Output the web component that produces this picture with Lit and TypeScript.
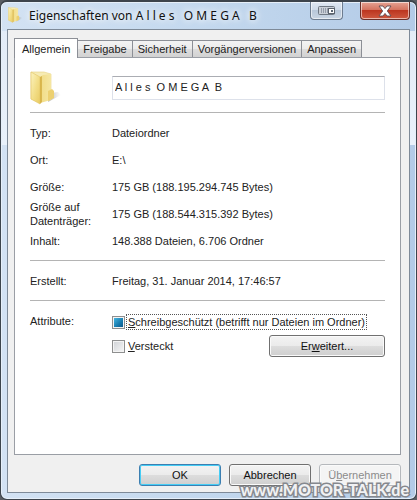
import { LitElement, html, css, svg } from "lit";
import { customElement, state } from "lit/decorators.js";

const folder = (cls: string) => html`
  <svg class=${cls} viewBox="0 0 32 34" aria-hidden="true">
    ${svg`
    <defs>
      <linearGradient id="front" x1="0" x2="1" y1="0" y2="1">
        <stop offset="0" stop-color="#fbf3c0" /><stop offset="0.5" stop-color="#f3df8a" /><stop offset="1" stop-color="#e9cb62" />
      </linearGradient>
      <linearGradient id="back" x1="0" x2="1" y1="0" y2="0">
        <stop offset="0" stop-color="#f1dc86" /><stop offset="1" stop-color="#f5e6a2" />
      </linearGradient>
      <linearGradient id="shade" x1="0" x2="1" y1="0" y2="0">
        <stop offset="0" stop-color="#8c8c8c" stop-opacity="0.7" /><stop offset="1" stop-color="#b0b0b0" stop-opacity="0" />
      </linearGradient>
    </defs>
    <path d="M18 31 L31 24 L28 21 L21 22 Z" fill="url(#shade)" />
    <path d="M1 1 L14 1 L21 3 L21 27 L9 31 L1 28 Z" fill="#f6ebb4" stroke="#e8d282" stroke-width="0.6" />
    <path d="M10 6 L13 4 L21 3 L21 29 L10 32 Z" fill="url(#back)" />
    <path d="M1 1 L10 6 L10 33 L1 28 Z" fill="url(#front)" stroke="#e2c566" stroke-width="0.6" />
    <path d="M10 6 L12 5 L12 31 L10 33 Z" fill="#d2ab3c" opacity="0.75" />
    <path d="M18 20 L22 18 L24 20 L24 27 L18 30 Z" fill="#ecd071" />
    `}
  </svg>
`;

@customElement("app-root")
export class AppRoot extends LitElement {
  static styles = css`
    * {
      box-sizing: border-box;
    }
    :host {
      display: block;
      background: #5a5e64;
      font: 11px/14px "Liberation Sans", Arial, sans-serif;
      color: #222;
    }
    .window {
      position: relative;
      display: flex;
      flex-direction: column;
      min-height: 100vh;
      padding: 0 6px 6px;
      border: 1px solid #3d444c;
      border-top-width: 2px;
      border-radius: 7px;
      background:
        linear-gradient(#fff0 0 29px, #e3ecf7 29px, #e9f1fa 143px, #fff0 143px),
        linear-gradient(90deg, #d3e2f3, #c3d8ee 50%, #b3cbe7);
      box-shadow: inset 0 0 0 1px #e6eff9;
    }
    .title {
      display: flex;
      align-items: flex-start;
      height: 27px;
      flex: none;
    }
    .icon-small {
      width: 15px;
      height: 16px;
      margin: 5px 6px 0 1px;
    }
    h1 {
      flex: 1;
      margin: 0;
      padding-top: 5px;
      font: 12px/17px "Noto Sans", "Open Sans", sans-serif;
      color: #111;
      white-space: pre;
      text-shadow: 0 0 6px #fff, 0 0 8px #fff;
    }
    .cap {
      display: flex;
      align-items: center;
      justify-content: center;
      padding: 0;
      height: 18px;
      border: 1px solid #6d7c8f;
      border-top: 0;
      border-radius: 0 0 4px 4px;
      box-shadow: inset 0 0 0 1px #ffffff90;
    }
    .dock {
      width: 33px;
      margin-right: 17px;
      background: linear-gradient(#dfe8f3, #cdd9e7 50%, #b9c8da 50%, #c9d5e3);
    }
    .close {
      width: 50px;
      border-color: #6b302a;
      background: linear-gradient(#e6a394, #d4705c 48%, #bc3620 50%, #cf5940);
    }
    .client {
      flex: 1;
      display: flex;
      flex-direction: column;
      padding: 8px 8px 6px 6px;
      border: 1px solid #7e8a98;
      background: #f0f0f0;
    }
    .tabs {
      display: flex;
      align-items: flex-end;
      height: 19px;
      z-index: 1;
    }
    .tab {
      height: 17px;
      padding: 0 5px;
      border: 1px solid #8c8f96;
      border-bottom: 0;
      border-left: 0;
      background: linear-gradient(#f3f3f3, #ebebeb 50%, #dddddd 50%, #d2d2d2);
      font: 11px/16px "Liberation Sans", Arial, sans-serif;
      color: #222;
      white-space: nowrap;
    }
    .tab.active {
      height: 20px;
      margin-bottom: -1px;
      padding: 0 7px;
      border-left: 1px solid #8c8f96;
      background: #fff;
    }
    .panel {
      flex: 1;
      padding: 12px 15px;
      border: 1px solid #9a9ea5;
      background: #fff;
    }
    .head {
      display: flex;
      align-items: center;
      height: 36px;
    }
    .icon-large {
      width: 32px;
      height: 34px;
      margin-right: 50px;
    }
    .name {
      flex: 1;
      min-width: 0;
      height: 24px;
      padding: 0 2px 3px;
      border: 1px solid #dde1ea;
      border-top-color: #abadb3;
      font: 11px/14px "Liberation Sans", Arial, sans-serif;
      color: #222;
    }
    hr {
      margin: 6px 0;
      border: 0;
      border-top: 1px solid #b4b4b4;
    }
    dl {
      margin: 0;
    }
    .row {
      display: flex;
      align-items: center;
      height: 27px;
    }
    dt,
    .legend {
      width: 82px;
      flex: none;
    }
    dd {
      margin: 0;
    }
    .attrs {
      display: flex;
      padding-top: 7px;
    }
    .options {
      flex: 1;
    }
    .option-row {
      display: flex;
      align-items: center;
      height: 24px;
    }
    .option-row:first-child {
      height: 16px;
      margin-bottom: 4px;
    }
    label {
      display: flex;
      align-items: center;
      gap: 2px;
      white-space: nowrap;
    }
    .caption {
      padding: 0 1px;
    }
    .focused {
      outline: 1px dotted #555;
    }
    .box {
      appearance: none;
      flex: none;
      width: 13px;
      height: 13px;
      margin: 0;
      border: 1px solid #8e8f8f;
      background: linear-gradient(135deg, #cfd2d6, #f6f6f6);
      box-shadow: inset 0 0 0 1px #f4f4f4;
    }
    .box:indeterminate {
      background: linear-gradient(135deg, #4dc0ea, #1679ac 60%, #0e4f80);
    }
    .btn {
      height: 22px;
      padding: 0;
      border: 1px solid #707070;
      border-radius: 3px;
      background: linear-gradient(#f3f3f3, #ebebeb 50%, #dddddd 50%, #cfcfcf);
      box-shadow: inset 0 0 0 1px #fafafa;
      font: 11px/16px "Liberation Sans", Arial, sans-serif;
      color: #111;
    }
    .advanced {
      width: 116px;
      margin-left: auto;
    }
    .footer {
      display: flex;
      justify-content: flex-end;
      gap: 8px;
      padding-top: 9px;
    }
    .footer .btn {
      width: 82px;
    }
    .footer .default {
      border-color: #3c7fb1;
      box-shadow: inset 0 0 0 1px #46cdf5;
    }
    .btn:disabled {
      border-color: #b5b8bc;
      background: #f4f4f4;
      color: #8b8b8b;
    }
    .mark {
      position: absolute;
      right: 7px;
      bottom: -1px;
      font: 900 16px/20px Lato, sans-serif;
      color: #f0f1f3;
      -webkit-text-stroke: 3px #85888e;
      paint-order: stroke fill;
      pointer-events: none;
    }
  `;

  @state() private tab = "Allgemein";

  private tabs = ["Allgemein", "Freigabe", "Sicherheit", "Vorgängerversionen", "Anpassen"];

  private facts = [
    ["Typ:", "Dateiordner"],
    ["Ort:", "E:\\"],
    ["Größe:", "175 GB (188.195.294.745 Bytes)"],
    ["Größe auf Datenträger:", "175 GB (188.544.315.392 Bytes)"],
    ["Inhalt:", "148.388 Dateien, 6.706 Ordner"],
  ];

  private row([label, value]: string[]) {
    return html`<div class="row"><dt>${label}</dt><dd>${value}</dd></div>`;
  }

  render() {
    return html`
      <main class="window">
        <header class="title">
          ${folder("icon-small")}
          <h1>Eigenschaften von A l l e s   O M E G A   B</h1>
          <button class="cap dock" aria-label="Andocken">
            <svg width="18" height="10" viewBox="0 0 18 10">
              <rect x="0.5" y="0.5" width="16" height="8" rx="1" fill="#c9cfd7" stroke="#6f7883" />
              <path d="M3.500 2v5M5.500 2v5M7.500 2v5M9.500 2v5" stroke="#959daa" />
              <rect x="10.500" y="2.500" width="6" height="5" fill="#fff" stroke="#5a626d" />
              <path d="M13 4h2v2h-2z" fill="#5c6673" />
            </svg>
          </button>
          <button class="cap close" aria-label="Schließen">
            <svg width="14" height="12" viewBox="0 0 14 12">
              <path d="M1 1h4l2 2.600 2-2.600h4L9.300 6 13 11H9L7 8.400 5 11H1l3.700-5z" fill="#fff" stroke="#5f4a50" stroke-width="0.9" />
            </svg>
          </button>
        </header>
        <section class="client">
          <nav class="tabs" role="tablist">
            ${this.tabs.map(
              (t) => html`<button
                role="tab"
                class="tab ${t === this.tab ? "active" : ""}"
                aria-selected=${t === this.tab}
                @click=${() => (this.tab = t)}
              >${t}</button>`
            )}
          </nav>
          <div class="panel" role="tabpanel">
            <div class="head">
              ${folder("icon-large")}
              <input class="name" aria-label="Name" value="A l l e s  O M E G A  B" />
            </div>
            <hr />
            <dl>${this.facts.map((f) => this.row(f))}</dl>
            <hr />
            <dl>${this.row(["Erstellt:", "Freitag, 31. Januar 2014, 17:46:57"])}</dl>
            <hr />
            <div class="attrs" role="group" aria-labelledby="attr">
              <div class="legend" id="attr">Attribute:</div>
              <div class="options">
                <div class="option-row">
                  <label>
                    <input class="box" type="checkbox" .indeterminate=${true} />
                    <span class="caption focused"><u>S</u>chreibgeschützt (betrifft nur Dateien im Ordner)</span>
                  </label>
                </div>
                <div class="option-row">
                  <label>
                    <input class="box" type="checkbox" />
                    <span class="caption"><u>V</u>ersteckt</span>
                  </label>
                  <button class="btn advanced">Er<u>w</u>eitert...</button>
                </div>
              </div>
            </div>
          </div>
          <footer class="footer">
            <button class="btn default">OK</button>
            <button class="btn">Abbrechen</button>
            <button class="btn" disabled>Ü<u>b</u>ernehmen</button>
          </footer>
        </section>
        <div class="mark">www.MOTOR-TALK.de</div>
      </main>
    `;
  }
}
